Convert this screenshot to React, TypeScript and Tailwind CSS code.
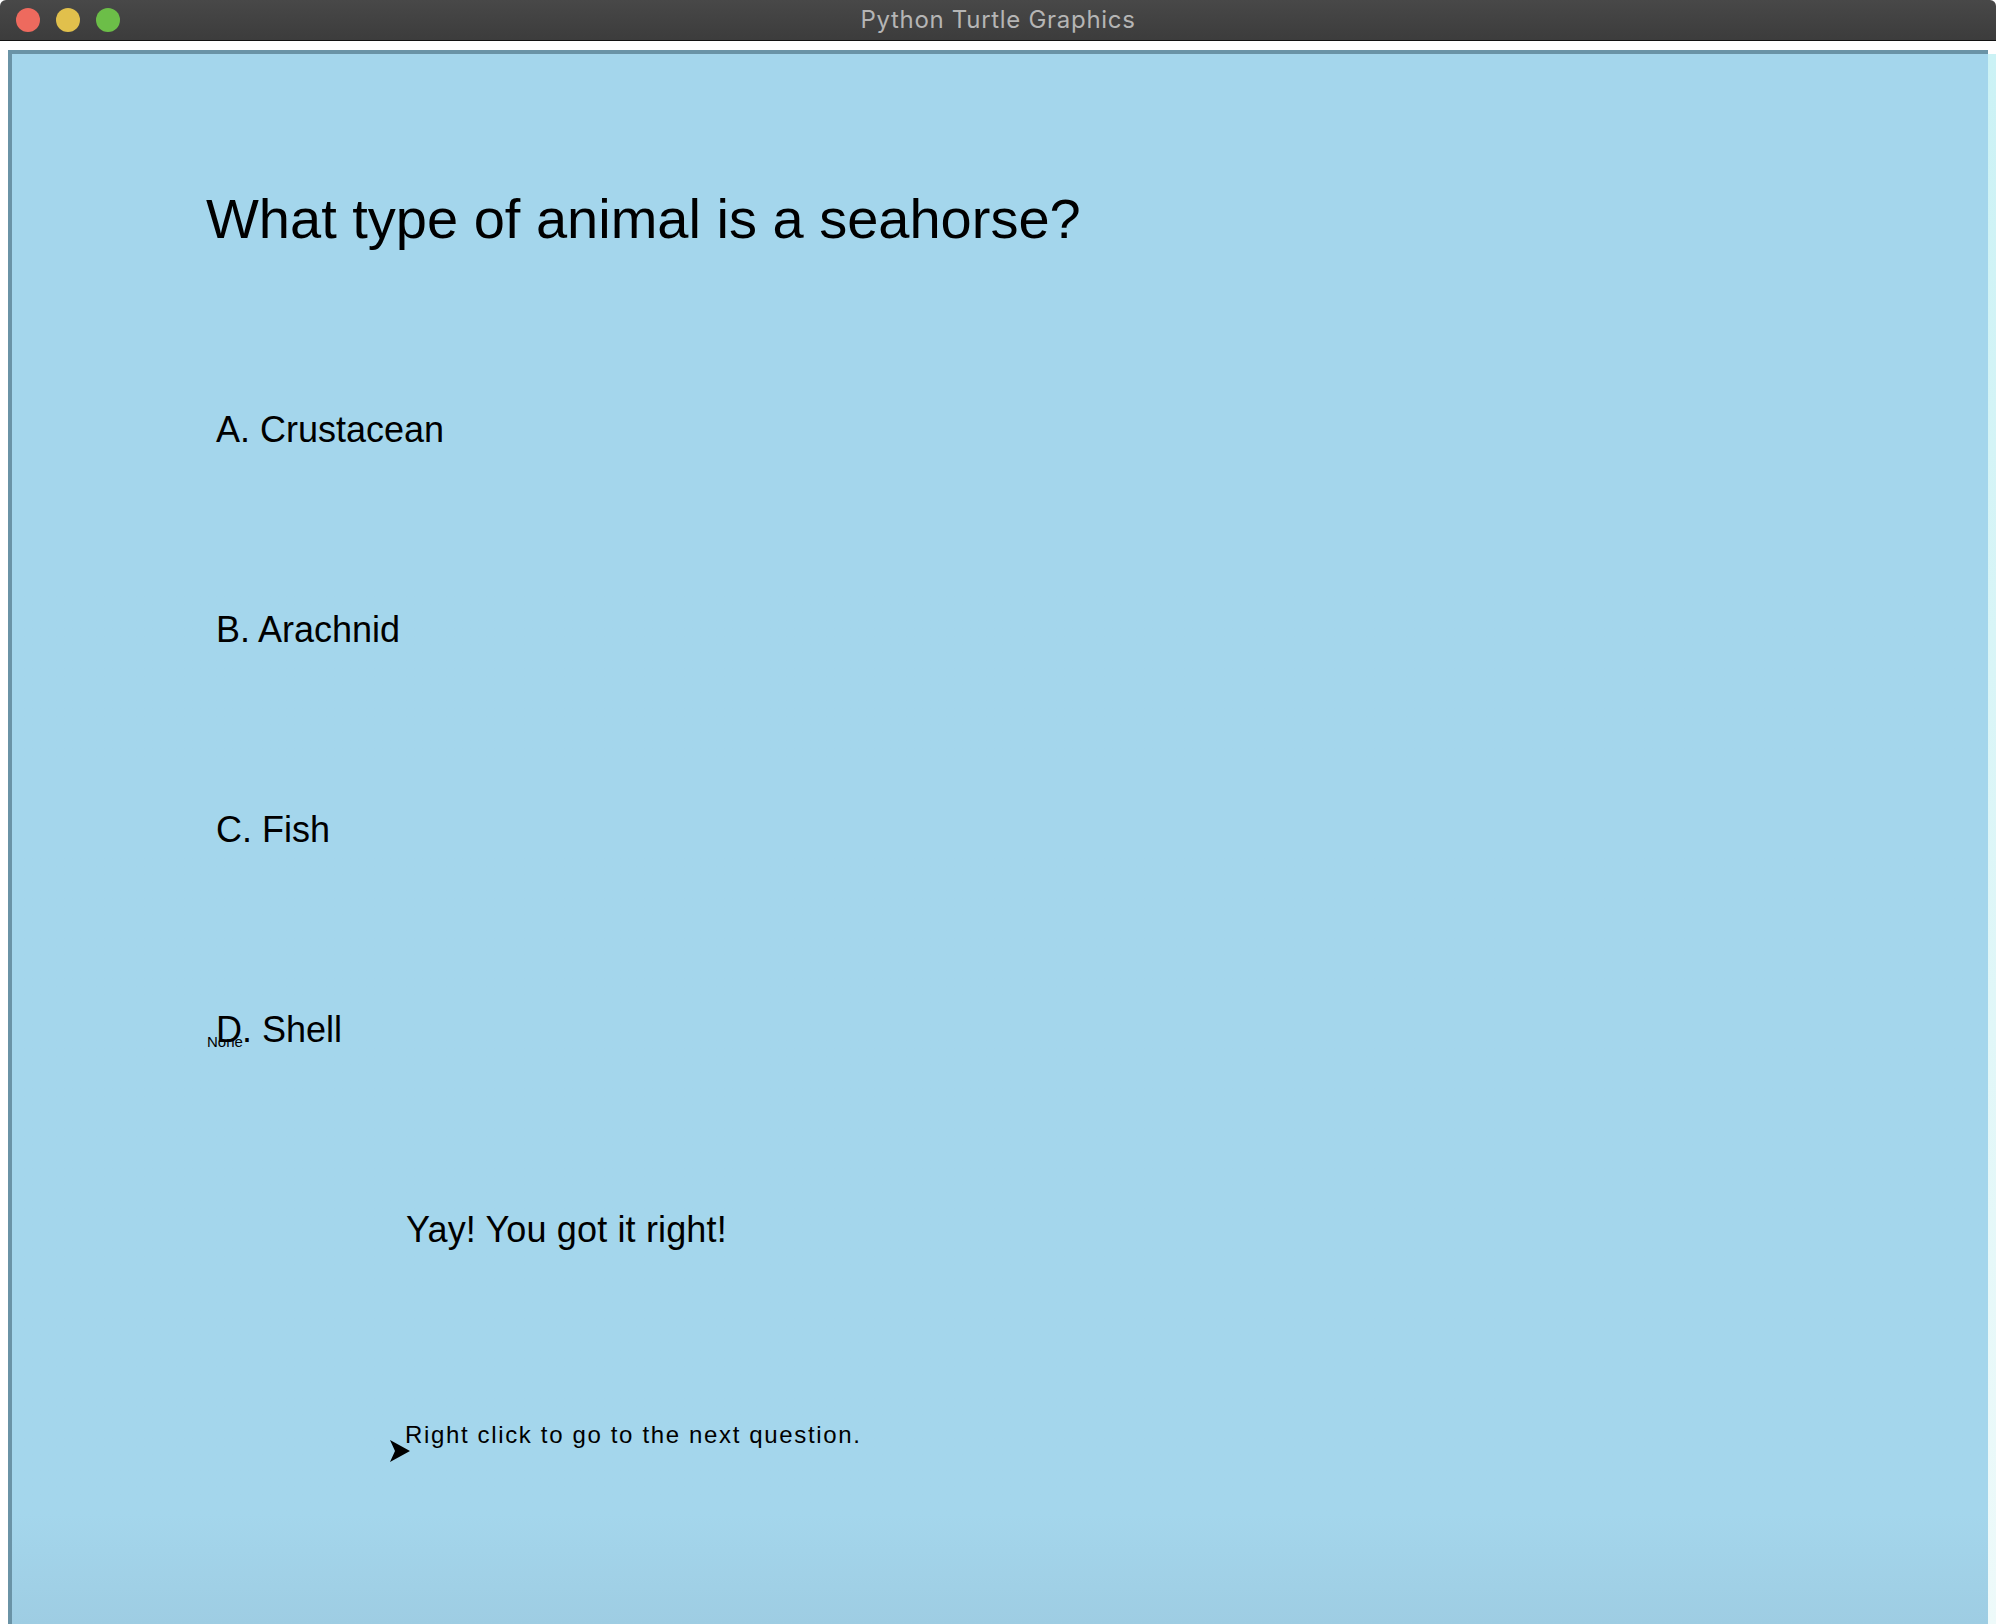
import React from "react";

const ANSWERS = ["A. Crustacean", "B. Arachnid", "C. Fish"];

function TrafficLights() {
  return (
    <div className="flex items-center gap-[16px] pl-[16px]">
      <span className="block h-[24px] w-[24px] rounded-full bg-[#ee6a5e]" />
      <span className="block h-[24px] w-[24px] rounded-full bg-[#e1c04c]" />
      <span className="block h-[24px] w-[24px] rounded-full bg-[#6cbe48]" />
    </div>
  );
}

function TurtleArrow() {
  return (
    <svg width="22" height="24" viewBox="0 0 22 24" className="mt-[17px] shrink-0">
      <polygon points="0,0 20,11 0,22 5,11" fill="#000" />
    </svg>
  );
}

export default function App() {
  return (
    <div className="flex h-[1624px] w-[1996px] flex-col overflow-hidden bg-white font-['Liberation_Sans',Arial,sans-serif] text-black">
      {/* Title bar */}
      <div className="relative flex h-[41px] shrink-0 items-center rounded-t-[6px] border-b border-[#121212] bg-linear-to-b from-[#484848] to-[#3c3c3c]">
        <TrafficLights />
        <div className="absolute inset-x-0 top-0 flex h-[40px] items-center justify-center">
          <span className="font-['Inter',sans-serif] text-[24px] leading-none tracking-[0.7px] text-[#b5b5b5]">
            Python Turtle Graphics
          </span>
        </div>
      </div>

      <div className="h-[9px] shrink-0 bg-white" />

      {/* Canvas */}
      <div className="flex flex-1">
        <div className="ml-[8px] flex-1 border-l-4 border-t-4 border-[#6a93a6] bg-linear-to-b from-[#a4d6ec] from-93% to-[#9ecde3]">
          <div className="flex flex-col pt-[137px]">
            <h1 className="ml-[194px] text-[56px] leading-none font-normal">
              What type of animal is a seahorse?
            </h1>

            <div className="mt-[165px] ml-[204px] flex flex-col gap-[164px]">
              {ANSWERS.map((a) => (
                <div key={a} className="text-[36px] leading-none">
                  {a}
                </div>
              ))}
              <div className="relative text-[36px] leading-none">
                D. Shell
                <span className="absolute top-[22px] left-[-9px] text-[15px] leading-none">None</span>
              </div>
            </div>

            <div className="mt-[164px] ml-[394px] text-[36px] leading-none tracking-[0.15px]">Yay! You got it right!</div>

            <div className="mt-[175px] ml-[378px] flex items-start">
              <TurtleArrow />
              <span className="ml-[-7px] text-[24px] leading-none tracking-[1.65px]">
                Right click to go to the next question.
              </span>
            </div>
          </div>
        </div>
        <div className="mt-[4px] w-[8px] bg-linear-to-b from-[#cbf2f5] to-[#eefafa]" />
      </div>
    </div>
  );
}
